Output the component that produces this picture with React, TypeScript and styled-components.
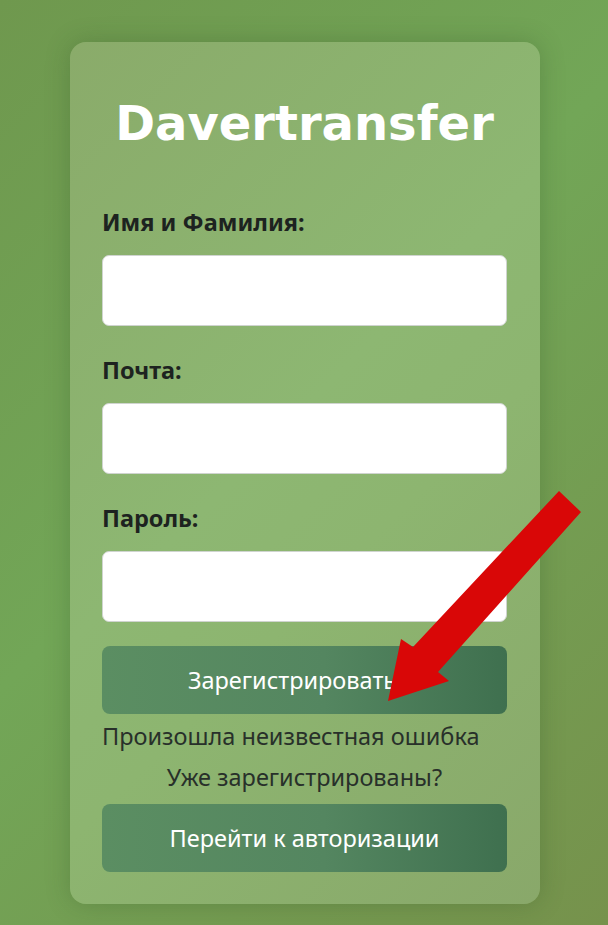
import React from "react";
import styled, { createGlobalStyle } from "styled-components";

const GlobalStyle = createGlobalStyle`
  html, body { margin: 0; padding: 0; }
  body {
    font-family: "Noto Sans", "Open Sans", sans-serif;
    background: #729a50;
  }
`;

const Page = styled.div`
  position: relative;
  width: 608px;
  height: 925px;
  overflow: hidden;
  background: linear-gradient(135deg, #6f984e 0%, #72a657 45%, #76924c 100%);
  display: flex;
  justify-content: flex-start;
  align-items: flex-start;
  padding: 42px 0 0 70px;
  box-sizing: border-box;
`;

const Card = styled.div`
  width: 470px;
  box-sizing: border-box;
  padding: 52px 33px 32px 32px;
  border-radius: 16px;
  background: linear-gradient(135deg, #8aab6a 0%, #8db772 45%, #8db570 60%, #89a86a 100%);
  box-shadow: 0 0 24px rgba(40, 70, 30, 0.25);
  display: flex;
  flex-direction: column;
`;

const Title = styled.h1`
  margin: 0 0 58px;
  text-align: center;
  font-family: "DejaVu Sans", "Open Sans", sans-serif;
  font-weight: 700;
  font-size: 48px;
  line-height: 58px;
  color: #ffffff;
`;

const Field = styled.div`
  display: flex;
  flex-direction: column;
  gap: 21px;
  margin-bottom: 32px;
  &:last-of-type { margin-bottom: 24px; }
`;

const Label = styled.label`
  font-weight: 700;
  font-size: 23.5px;
  line-height: 24px;
  color: #1d2320;
`;

const Input = styled.input`
  height: 71px;
  box-sizing: border-box;
  border: 1px solid #cfd4cf;
  border-radius: 7px;
  background: #ffffff;
  font-size: 18px;
  padding: 0 14px;
  outline: none;
`;

const Button = styled.button`
  height: 68px;
  border: none;
  border-radius: 8px;
  background: linear-gradient(90deg, #5b8e62 0%, #548660 55%, #3f704f 100%);
  color: #ffffff;
  font-family: "Noto Sans", "Open Sans", sans-serif;
  font-size: 23.5px;
  cursor: pointer;
`;

const ErrorText = styled.p`
  margin: 9px 0 14px;
  font-size: 23.5px;
  line-height: 27px;
  color: #28302a;
`;

const Hint = styled.p`
  margin: 0 0 13px;
  text-align: center;
  font-size: 23.5px;
  line-height: 27px;
  color: #28302a;
`;

const Arrow = styled.svg`
  position: absolute;
  left: 0;
  top: 0;
  pointer-events: none;
`;

export default function App() {
  return (
    <>
      <GlobalStyle />
      <Page>
        <Card>
          <Title>Davertransfer</Title>
          <Field>
            <Label>Имя и Фамилия:</Label>
            <Input type="text" />
          </Field>
          <Field>
            <Label>Почта:</Label>
            <Input type="email" />
          </Field>
          <Field>
            <Label>Пароль:</Label>
            <Input type="password" />
          </Field>
          <Button>Зарегистрироваться</Button>
          <ErrorText>Произошла неизвестная ошибка</ErrorText>
          <Hint>Уже зарегистрированы?</Hint>
          <Button>Перейти к авторизации</Button>
        </Card>
        <Arrow width="608" height="925" viewBox="0 0 608 925">
          <polygon
            points="559,491 413,647 401,639 388,701 449,681 438,672 581,512"
            fill="#d90707"
          />
        </Arrow>
      </Page>
    </>
  );
}
